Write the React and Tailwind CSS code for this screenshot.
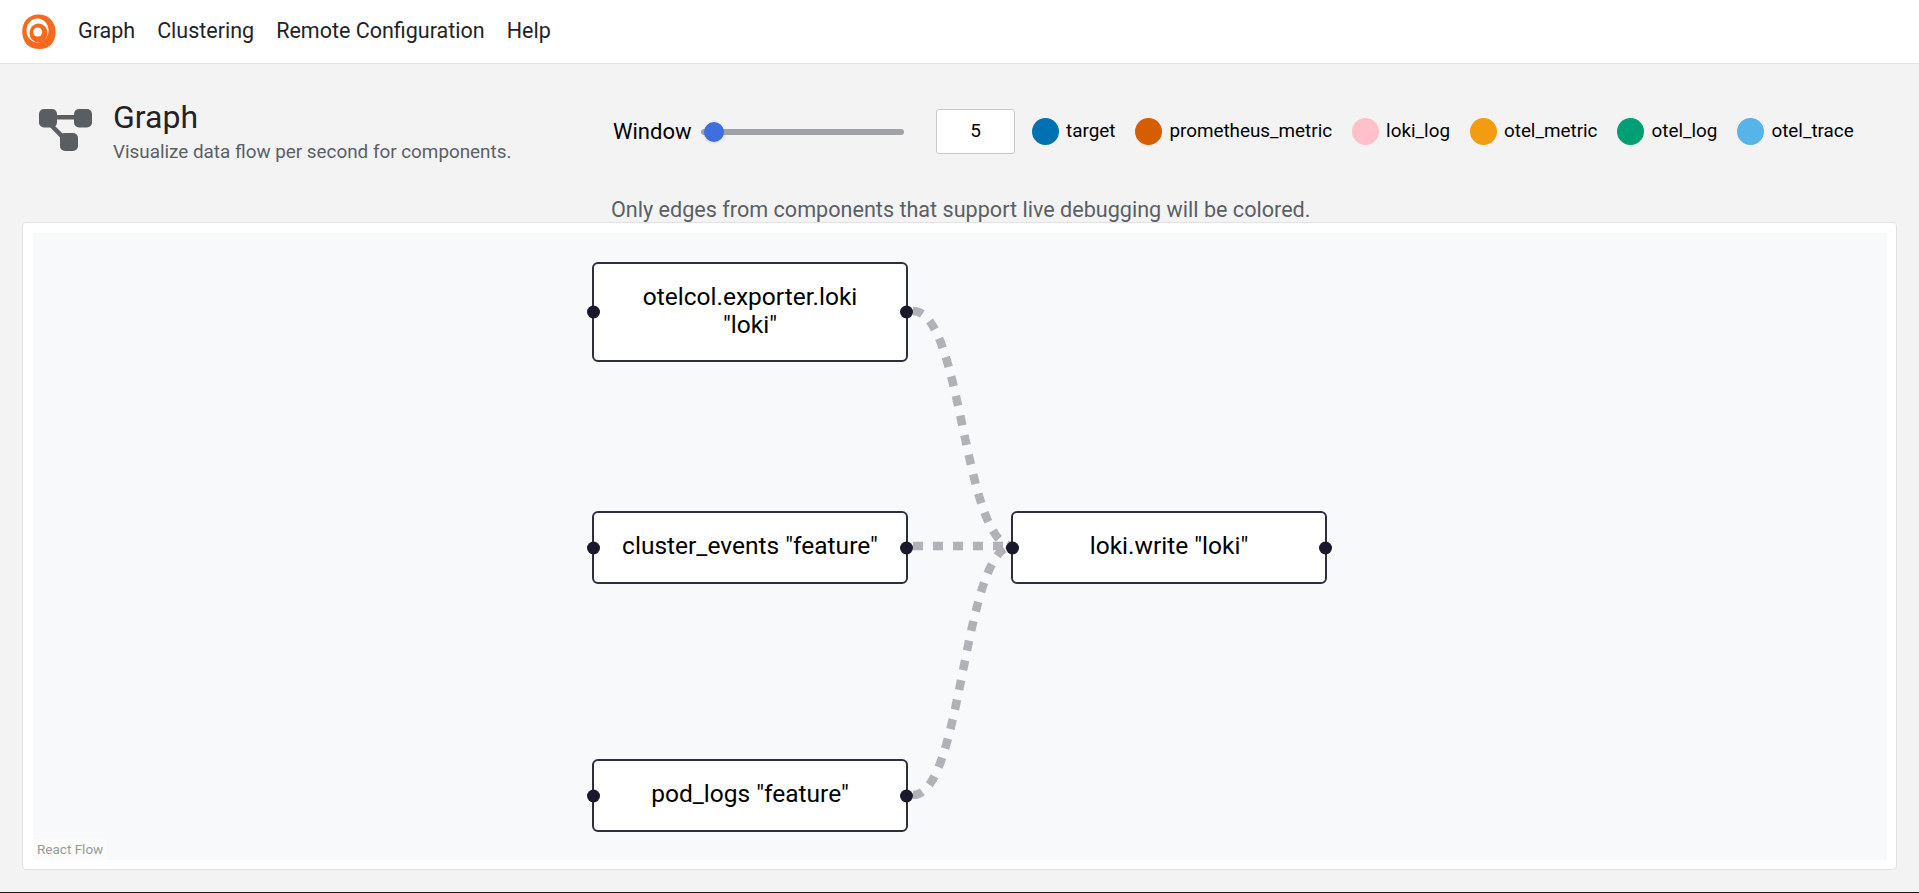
import React from 'react'

const navItems = ['Graph', 'Clustering', 'Remote Configuration', 'Help']

const legend = [
    { name: 'target', color: 'bg-[#0072b2]' },
    { name: 'prometheus_metric', color: 'bg-[#d55e00]' },
    { name: 'loki_log', color: 'bg-[#ffc0cb]' },
    { name: 'otel_metric', color: 'bg-[#f39c12]' },
    { name: 'otel_log', color: 'bg-[#009e73]' },
    { name: 'otel_trace', color: 'bg-[#56b4e9]' },
]

// canvas coordinates of the react flow diagram
const nodes = [
    { id: 'a', lines: ['otelcol.exporter.loki', '"loki"'], box: 'left-[559px] top-[29px] h-[100px]' },
    { id: 'b', lines: ['cluster_events "feature"'], box: 'left-[559px] top-[278px] h-[73px]' },
    { id: 'c', lines: ['pod_logs "feature"'], box: 'left-[559px] top-[526px] h-[73px]' },
    { id: 'd', lines: ['loki.write "loki"'], box: 'left-[978px] top-[278px] h-[73px]' },
]

const edges = [
    'M880 78 C930 78 930 313 980 313',
    'M880 313 L980 313',
    'M880 562 C930 562 930 313 980 313',
]

const Logo = () => (
    <svg width="34" height="35" viewBox="0 0 34 35">
        <path
            fill="#f56a1f"
            d="M15 0.5C24 -0.5 31 5 33 13C35 22 32 31 24 34C15 36.5 5 34 2 26C-1 19 0 11 4 6C7 2.5 11 1 15 0.5Z"
        />
        <ellipse cx="15.5" cy="16.5" rx="11" ry="12" fill="#fff" />
        <ellipse cx="16.5" cy="19" rx="9" ry="9.5" fill="#f56a1f" />
        <ellipse cx="15.7" cy="18" rx="4.5" ry="4.5" fill="#fff" />
    </svg>
)

const GraphIcon = () => (
    <svg width="53" height="42" viewBox="0 0 53 42" fill="#5a5e62" stroke="none">
        <rect x="0" y="0" width="18" height="18.5" rx="5" />
        <rect x="35" y="0" width="18" height="18.5" rx="5" />
        <rect x="21" y="24" width="18" height="18" rx="5" />
        <path d="M16 6h20v4.5H16z" />
        <path d="M9 16l3.5-2.5 14 14-3.5 3z" />
    </svg>
)

const Handle = ({ side }) => (
    <span className={`absolute top-1/2 h-[13px] w-[13px] -translate-y-1/2 rounded-full bg-[#1a192b] ${side === 'left' ? 'left-[-7px]' : 'right-[-7px]'}`} />
)

const App = () => {
    return (
        <div className="flex h-[893px] flex-col overflow-hidden bg-[#f3f3f3] font-['Roboto',sans-serif]">
            {/* Navbar */}
            <header className="flex h-[64px] items-center border-b border-[#e4e4e4] bg-white pl-[22px]">
                <Logo />
                <nav className="ml-[22px] flex gap-[22px] text-[21.5px] text-[#1f2328]">
                    {navItems.map((item) => (
                        <a key={item}>{item}</a>
                    ))}
                </nav>
            </header>

            {/* Page header */}
            <div className="flex h-[158px] pl-[39px]">
                <div className="w-[572px]">
                    <div className="flex pt-[45px]">
                        <GraphIcon />
                        <div className="ml-[21px] mt-[-10px]">
                            <h1 className="text-[32px] leading-[36px] text-[#1f2328]">Graph</h1>
                            <p className="mt-[5px] text-[18.85px] leading-[24px] text-[#5a5f66]">Visualize data flow per second for components.</p>
                        </div>
                    </div>
                </div>
                <div>
                    <div className="flex items-center pl-[2px] pt-[45px] text-black">
                        <span className="w-[77px] text-[22px]">Window</span>
                        <div className="relative ml-[11px] h-[6px] w-[203px] rounded-full bg-[#a0a2a7]">
                            <span className="absolute left-[3px] top-1/2 h-5 w-5 -translate-y-1/2 rounded-full bg-[#3f6fde] shadow" />
                        </div>
                        <div className="ml-[32px] flex h-[45px] w-[79px] items-center justify-center rounded-[3px] border border-[#c8c8c8] bg-white text-[19px]">5</div>
                        <div className="ml-[17px] flex gap-[20px]">
                            {legend.map((item) => (
                                <div key={item.name} className="flex items-center gap-[7px]">
                                    <span className={`h-[27px] w-[27px] rounded-full ${item.color}`} />
                                    <span className="text-[18.85px]">{item.name}</span>
                                </div>
                            ))}
                        </div>
                    </div>
                    <p className="mt-[42px] text-[21.6px] leading-[28px] text-[#5a5f66]">Only edges from components that support live debugging will be colored.</p>
                </div>
            </div>

            {/* Graph card */}
            <div className="mx-[22px] flex h-[648px] rounded-[4px] border border-[#e2e2e2] bg-white pb-[9px] pl-[10px] pr-[9px] pt-[10px]">
                <div className="relative flex-1 bg-[#f8f9fb]">
                    <svg className="absolute inset-0 h-full w-full" fill="none" stroke="#b1b1b7" strokeWidth="8.5" strokeDasharray="10 10">
                        {edges.map((d) => (
                            <path key={d} d={d} />
                        ))}
                    </svg>
                    {nodes.map((node) => (
                        <div key={node.id} className={`absolute flex w-[316px] flex-col items-center justify-center rounded-[6px] border-2 border-[#2f2e3f] bg-white pb-[3px] text-center text-[24.5px] leading-[28px] text-black ${node.box}`}>
                            {node.lines.map((line) => (
                                <div key={line}>{line}</div>
                            ))}
                            <Handle side="left" />
                            <Handle side="right" />
                        </div>
                    ))}
                    <div className="absolute bottom-0 left-0 bg-white/50 px-[4px] py-[2px] text-[13.5px] leading-[17px] text-[#999]">React Flow</div>
                </div>
            </div>

            <div className="mt-auto h-px bg-[#1a1f1c]" />
        </div>
    )
}

export default App
